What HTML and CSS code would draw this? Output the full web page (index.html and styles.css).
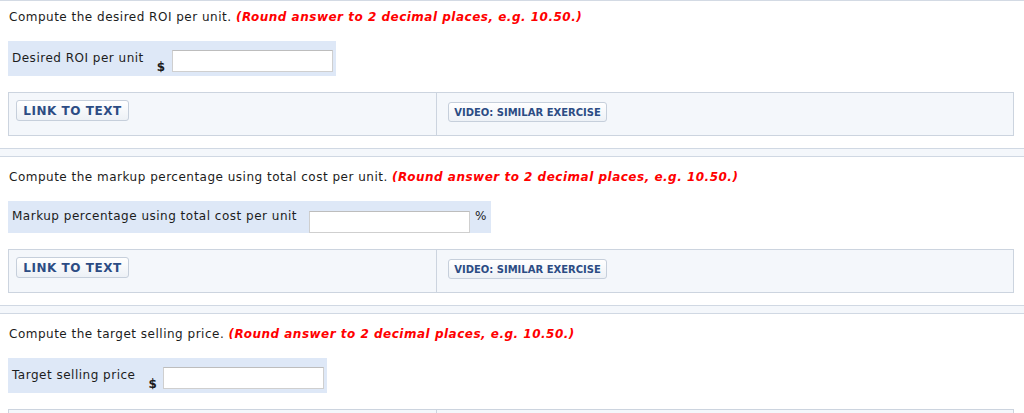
FILE: index.html
```html
<!DOCTYPE html>
<html>
<head>
<meta charset="utf-8">
<title>Exercise</title>
<link rel="stylesheet" href="styles.css">
</head>
<body>
<div class="page">
  <section class="part part-first">
    <p class="question">Compute the desired ROI per unit. <em class="hint">(Round answer to 2 decimal places, e.g. 10.50.)</em></p>
    <div class="answer-row">
      <div class="answer-box">
        <span class="label">Desired ROI per unit</span>
        <span class="unit unit-pre">$</span>
        <input class="field" type="text">
      </div>
    </div>
    <div class="panel">
      <div class="cell cell-left"><button class="btn btn-link">LINK TO TEXT</button></div>
      <div class="cell cell-right"><button class="btn btn-video">VIDEO: SIMILAR EXERCISE</button></div>
    </div>
  </section>
  <div class="sep"></div>
  <section class="part">
    <p class="question">Compute the markup percentage using total cost per unit. <em class="hint">(Round answer to 2 decimal places, e.g. 10.50.)</em></p>
    <div class="answer-row">
      <div class="answer-box answer-box-short">
        <span class="label label-wide">Markup percentage using total cost per unit</span>
        <input class="field field-mid" type="text">
        <span class="unit unit-post">%</span>
      </div>
    </div>
    <div class="panel">
      <div class="cell cell-left"><button class="btn btn-link">LINK TO TEXT</button></div>
      <div class="cell cell-right"><button class="btn btn-video">VIDEO: SIMILAR EXERCISE</button></div>
    </div>
  </section>
  <div class="sep"></div>
  <section class="part">
    <p class="question">Compute the target selling price. <em class="hint">(Round answer to 2 decimal places, e.g. 10.50.)</em></p>
    <div class="answer-row">
      <div class="answer-box">
        <span class="label">Target selling price</span>
        <span class="unit unit-pre">$</span>
        <input class="field" type="text">
      </div>
    </div>
    <div class="panel">
      <div class="cell cell-left"><button class="btn btn-link">LINK TO TEXT</button></div>
      <div class="cell cell-right"><button class="btn btn-video">VIDEO: SIMILAR EXERCISE</button></div>
    </div>
  </section>
</div>
</body>
</html>
```
FILE: styles.css
```css
html, body {
  margin: 0;
  padding: 0;
  background: #ffffff;
}

body {
  font-family: "DejaVu Sans", Verdana, sans-serif;
  font-size: 12px;
  line-height: 15px;
  letter-spacing: 0.5px;
  color: #1c1c1c;
  overflow: hidden;
  height: 413px;
}

.page {
  border-top: 1px solid #d3dae4;
}

.part {
  padding: 13px 10px 12px 8px;
}

.part-first {
  padding-top: 9px;
}

.question {
  margin: 0 0 16px 1px;
}

.hint {
  color: #ff0000;
  font-weight: bold;
  font-style: italic;
}

.answer-row {
  display: flex;
}

.answer-box {
  display: flex;
  align-items: flex-start;
  background: #dee8f7;
  padding: 0 3px 0 4px;
  height: 35px;
  box-sizing: border-box;
}

.answer-box-short {
  height: 32px;
}

.label {
  margin-top: 10px;
  margin-right: 13px;
}

.label-wide {
  margin-top: 8px;
  margin-right: 12px;
}

.unit-pre {
  margin-top: 19px;
  margin-right: 6px;
  font-weight: 600;
}

.unit-post {
  margin-top: 8px;
  margin-left: 5px;
  margin-right: 1px;
}

.field {
  margin: 9px 0 0 0;
  width: 161px;
  height: 22px;
  box-sizing: border-box;
  border: 1px solid #cfcfcf;
  border-top-color: #bdbdbd;
  background: #ffffff;
  padding: 0 3px;
  font: inherit;
}

.field-mid {
  margin-top: 10px;
}

.panel {
  margin-top: 16px;
  display: grid;
  grid-template-columns: 428px 1fr;
  height: 44px;
  box-sizing: border-box;
  border: 1px solid #ccd4df;
  background: #f4f7fb;
}

.cell-left {
  padding: 7px 0 0 7px;
  border-right: 1px solid #ccd4df;
}

.cell-right {
  padding: 9px 0 0 11px;
}

.btn {
  display: block;
  margin: 0;
  font-family: "DejaVu Sans", Verdana, sans-serif;
  font-weight: bold;
  color: #2c4c84;
  background: linear-gradient(#ffffff, #edf1f6);
  border: 1px solid #c6cfdb;
  border-radius: 3px;
  box-sizing: border-box;
  height: 21px;
  padding: 0;
  cursor: pointer;
}

.btn-link {
  width: 113px;
  font-size: 12px;
  letter-spacing: 0.55px;
}

.btn-video {
  width: 159px;
  height: 20px;
  font-size: 10px;
  letter-spacing: 0;
}

.sep {
  height: 7px;
  border-top: 1px solid #d0d8e3;
  border-bottom: 1px solid #d0d8e3;
  background: #f4f7fb;
}
```
